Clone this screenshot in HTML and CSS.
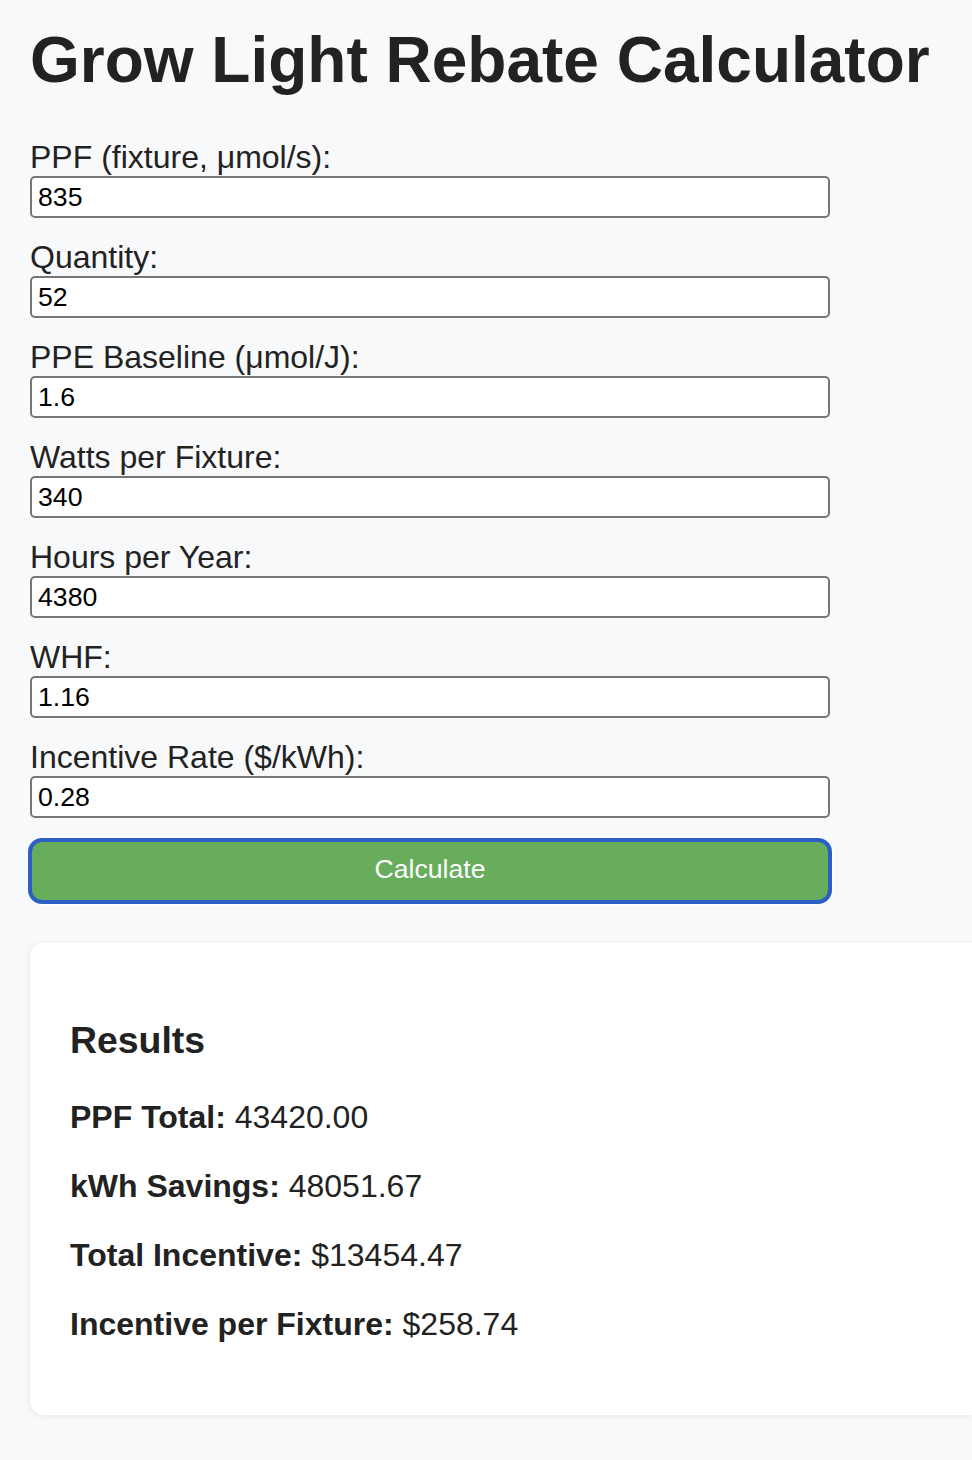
FILE: index.html
```html
<!DOCTYPE html>
<html lang="en">
<head>
<meta charset="utf-8">
<title>Grow Light Rebate Calculator</title>
<link rel="stylesheet" href="styles.css">
</head>
<body>
<main class="page">
  <h1 class="title">Grow Light Rebate Calculator</h1>
  <form class="calc">
    <label class="field-label" for="ppf">PPF (fixture, μmol/s):</label>
    <input class="field-input" id="ppf" type="text" value="835">
    <label class="field-label" for="qty">Quantity:</label>
    <input class="field-input" id="qty" type="text" value="52">
    <label class="field-label" for="ppe">PPE Baseline (μmol/J):</label>
    <input class="field-input" id="ppe" type="text" value="1.6">
    <label class="field-label" for="watts">Watts per Fixture:</label>
    <input class="field-input" id="watts" type="text" value="340">
    <label class="field-label" for="hours">Hours per Year:</label>
    <input class="field-input" id="hours" type="text" value="4380">
    <label class="field-label" for="whf">WHF:</label>
    <input class="field-input" id="whf" type="text" value="1.16">
    <label class="field-label" for="rate">Incentive Rate ($/kWh):</label>
    <input class="field-input" id="rate" type="text" value="0.28">
    <button class="calc-btn" type="button">Calculate</button>
  </form>
  <section class="results">
    <h3 class="results-title">Results</h3>
    <p class="result-line"><strong>PPF Total:</strong> 43420.00</p>
    <p class="result-line"><strong>kWh Savings:</strong> 48051.67</p>
    <p class="result-line"><strong>Total Incentive:</strong> $13454.47</p>
    <p class="result-line"><strong>Incentive per Fixture:</strong> $258.74</p>
  </section>
</main>
</body>
</html>
```
FILE: styles.css
```css
body {
  margin: 0;
  background: #f8f9fb;
  color: #222222;
  font-family: "Liberation Sans", Arial, Helvetica, sans-serif;
}
.page {
  padding: 23px 30px 40px 30px;
}
.title {
  font-size: 64px;
  font-weight: bold;
  line-height: 74px;
  margin: 0 0 42px 0;
  color: #222222;
  white-space: nowrap;
}
.calc {
  width: 800px;
  display: flex;
  flex-direction: column;
}
.field-label {
  display: block;
  font-size: 32px;
  line-height: 37px;
  color: #222222;
}
.field-input {
  box-sizing: border-box;
  width: 800px;
  height: 42px;
  margin: 0 0 21px 0;
  padding: 0 6px;
  border: 2px solid #767676;
  border-radius: 5px;
  background: #ffffff;
  font-family: "Liberation Sans", Arial, Helvetica, sans-serif;
  font-size: 26.67px;
  color: #000000;
}
.calc-btn {
  box-sizing: border-box;
  width: 800px;
  height: 62px;
  margin: 1px 0 0 0;
  padding: 0 0 3px 0;
  border: none;
  border-radius: 12px;
  background: #67ad5c;
  color: #ffffff;
  font-family: "Liberation Sans", Arial, Helvetica, sans-serif;
  font-size: 26.67px;
  outline: 4px solid #2b5fc6;
  outline-offset: -2px;
  box-shadow: 0 0 0 3px #ffffff;
}
.results {
  margin: 41px -30px 0 0;
  padding: 40px;
  background: #ffffff;
  border-radius: 14px 0 0 14px;
  box-shadow: 0 1px 6px rgba(0, 0, 0, 0.08);
}
.results-title {
  font-size: 37.4px;
  line-height: 43px;
  margin: 36px 0 37px 0;
}
.result-line {
  font-size: 32px;
  line-height: 37px;
  margin: 32px 0;
}
.result-line:first-of-type {
  margin-top: 0;
}
```
